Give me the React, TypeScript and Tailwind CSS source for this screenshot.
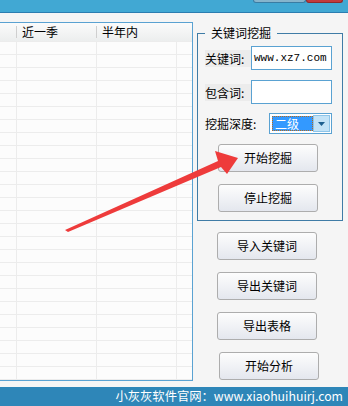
import React from 'react';

const cjk = { fontFamily: '"Noto Sans CJK SC", "Noto Sans", sans-serif' };

function Btn({ label, className = '' }: { label: string; className?: string }) {
  return (
    <div
      className={`w-[100px] h-[28px] flex items-center justify-center rounded-[3px] border border-[#adadad] bg-gradient-to-b from-[#fdfdfd] to-[#e4e7ee] text-[12px] text-black ${className}`}
    >
      {label}
    </div>
  );
}

export default function App() {
  const rows = Array.from({ length: 26 });

  return (
    <div className="w-[348px] h-[406px] relative overflow-hidden bg-[#f5f5f5] flex flex-col" style={cjk}>
      {/* title bar */}
      <div className="h-[13px] bg-[#41a8d3] border-b border-[#2b7db0] flex justify-end items-start pr-[5px]">
        <div className="w-[53px] h-[3px] bg-[#86b4cc] border border-t-0 border-[#3a7ca3] rounded-b-[3px]" />
        <div className="w-[37px] h-[3px] bg-[#c23a3c] border border-t-0 border-[#8e2a2c] rounded-b-[3px]" />
      </div>

      <div className="flex-1 flex">
        {/* result table */}
        <div className="mt-[9px] w-[193px] h-[359px] border border-l-0 border-[#5aa2d2] bg-[#fcfcfc] flex flex-col overflow-hidden">
          <div className="h-[18px] shrink-0 flex items-center bg-gradient-to-b from-[#fbfbfb] to-[#eceeee] text-[12px] text-black">
            <div className="w-[16px]" />
            <div className="w-[1px] h-[12px] bg-[#cfcfcf]" />
            <div className="w-[79px] pl-[5px] leading-[18px]">近一季</div>
            <div className="w-[1px] h-[12px] bg-[#cfcfcf]" />
            <div className="w-[80px] pl-[5px] leading-[18px]">半年内</div>
            <div className="flex-1" />
          </div>
          <div className="h-[1px] shrink-0 bg-[#ececec]" />
          {rows.map((_, i) => (
            <div key={i} className="h-[13px] shrink-0 flex border-b border-[#ececec]">
              <div className="w-[17px] border-r border-[#ececec]" />
              <div className="w-[80px] border-r border-[#ececec]" />
              <div className="w-[80px] border-r border-[#ececec]" />
              <div className="flex-1" />
            </div>
          ))}
        </div>

        {/* right controls */}
        <div className="ml-[4px] w-[146px] flex flex-col">
          <fieldset className="mt-[12px] border border-[#3f7ca6] pb-[8px]">
            <legend className="ml-[7px] px-[6px] text-[12px] leading-[16px] text-black">关键词挖掘</legend>
            <div className="pl-[7px] flex flex-col text-[12px] text-black">
              <div className="mt-[5px] flex items-center h-[24px]">
                <div className="w-[46px] h-[17px] leading-[17px] bg-[#ececec]">关键词:</div>
                <div
                  className="w-[81px] h-[24px] border border-[#5aa2d2] bg-white pl-[2px] text-[11px] leading-[22px] text-black"
                  style={{ fontFamily: '"Liberation Mono", monospace' }}
                >
                  www.xz7.com
                </div>
              </div>
              <div className="mt-[10px] flex items-center h-[24px]">
                <div className="w-[46px] h-[17px] leading-[17px] bg-[#ececec]">包含词:</div>
                <div className="w-[81px] h-[24px] border border-[#5aa2d2] bg-white" />
              </div>
              <div className="mt-[9px] flex items-center h-[21px]">
                <div className="w-[64px] leading-[17px]">挖掘深度:</div>
                <div className="w-[63px] h-[21px] border border-[#5aa2d2] bg-white flex items-center pl-[2px] pr-[1px]">
                  <div className="w-[42px] h-[15px] bg-[#3399ff] border border-dotted border-[#b36b1f] text-white text-[12px] leading-[13px] pl-[2px]">
                    二级
                  </div>
                  <div className="ml-auto w-[17px] h-[17px] bg-[#c3e3f7] border border-[#8fc5e9] flex items-center justify-center">
                    <svg width="7" height="4" viewBox="0 0 7 4">
                      <path d="M0 0 H7 L3.5 4 Z" fill="#1d5f8f" />
                    </svg>
                  </div>
                </div>
              </div>
              <Btn label="开始挖掘" className="mt-[10px] ml-[13px]" />
              <Btn label="停止挖掘" className="mt-[12px] ml-[13px]" />
            </div>
          </fieldset>

          <Btn label="导入关键词" className="mt-[11px] ml-[20px]" />
          <Btn label="导出关键词" className="mt-[12px] ml-[20px]" />
          <Btn label="导出表格" className="mt-[12px] ml-[20px]" />
          <Btn label="开始分析" className="mt-[12px] ml-[22px]" />
        </div>
      </div>

      {/* status bar */}
      <div className="h-[19px] shrink-0 bg-[#2e86b8] text-white text-[12.3px] flex items-center justify-end pr-[5px] leading-[19px]">
        小灰灰软件官网：www.xiaohuihuirj.com
      </div>

      {/* red annotation arrow */}
      <svg className="absolute inset-0 pointer-events-none" width="348" height="406" viewBox="0 0 348 406">
        <polygon
          points="65,230 218,161 215,151 238,158 227,174 221,167 68,232"
          fill="#ee3b3b"
        />
      </svg>
    </div>
  );
}
